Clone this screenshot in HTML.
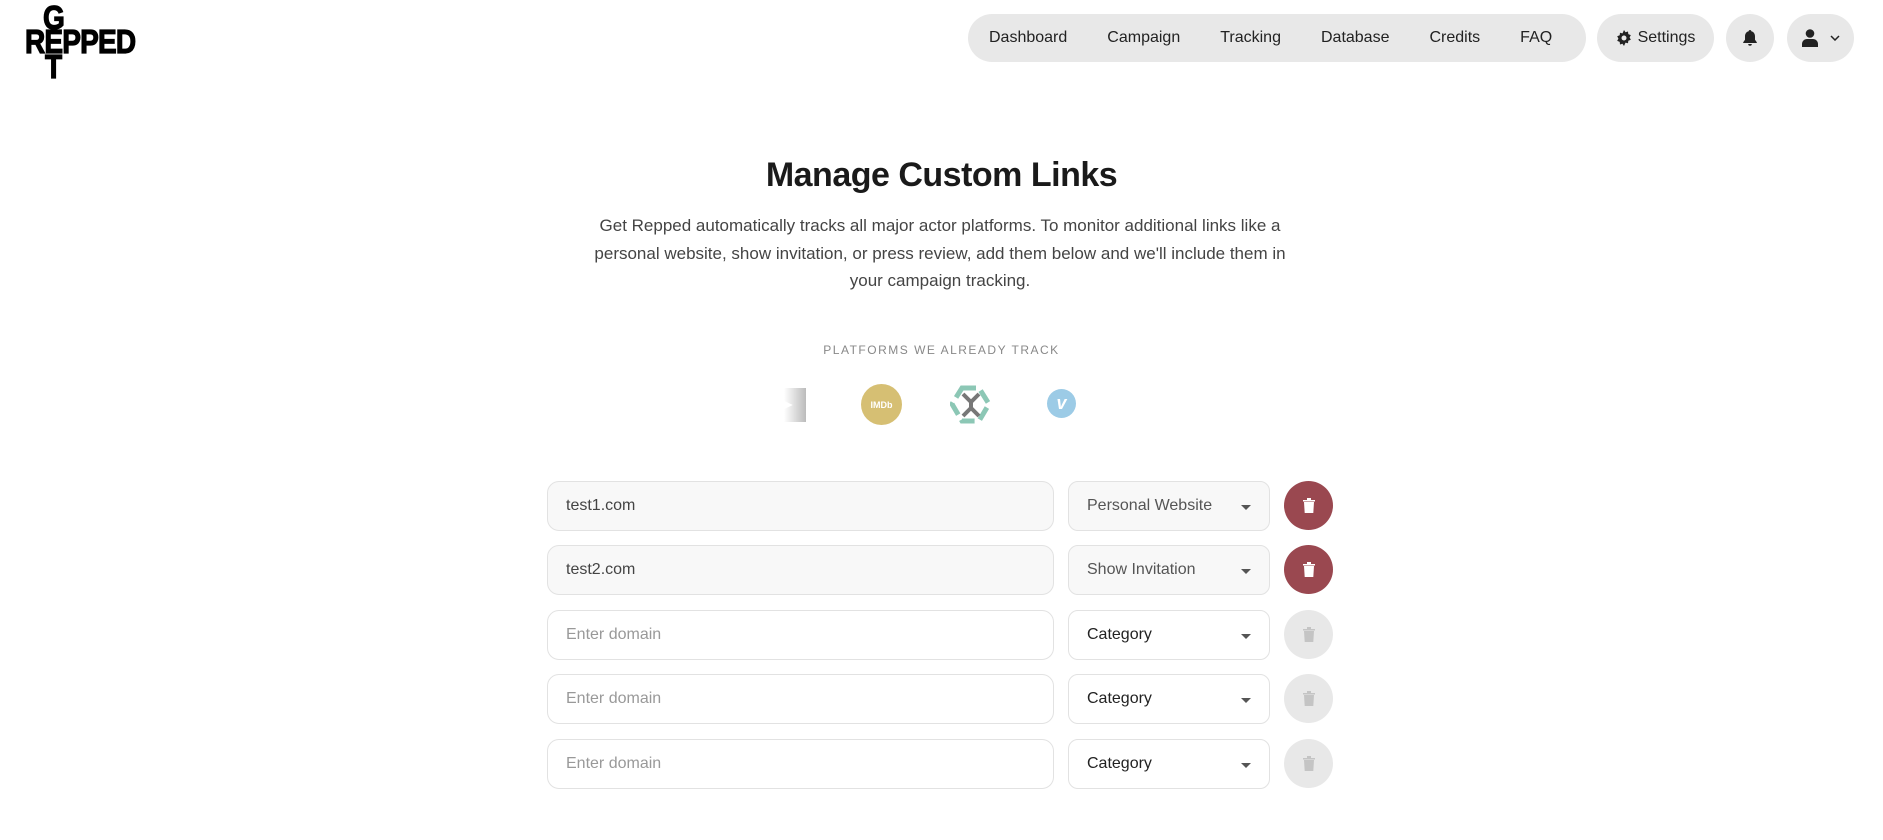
<!DOCTYPE html>
<html><head><meta charset="utf-8"><style>
*{box-sizing:border-box;margin:0;padding:0}
body{width:1883px;height:840px;background:#fff;font-family:"Liberation Sans",sans-serif;color:#222;position:relative;overflow:hidden}
.abs{position:absolute}
.pill{position:absolute;top:14px;height:48px;background:#e8e8e8;border-radius:24px;display:flex;align-items:center}
.nav a{font-size:16px;color:#222;margin:0 20px}
.logo{font-family:"Liberation Sans",sans-serif;font-weight:bold;font-size:33px;letter-spacing:-1px;transform:scaleX(0.85);transform-origin:left;position:absolute;line-height:1;-webkit-text-stroke:1.2px #000;color:#000}
h1{position:absolute;top:156px;width:100%;text-align:center;font-size:34px;font-weight:bold;letter-spacing:-0.5px;color:#1a1a1a}
.p{position:absolute;top:212px;left:590px;width:700px;text-align:center;font-size:17px;line-height:27.5px;color:#444}
.lab{position:absolute;top:343px;width:100%;text-align:center;font-size:12px;letter-spacing:1.5px;color:#888}
.in{position:absolute;left:547px;width:507px;height:50px;border:1px solid #e2e2e2;border-radius:12px;padding-left:18px;display:flex;align-items:center;font-size:16px}
.sel{position:absolute;left:1068px;width:202px;height:50px;border:1px solid #e2e2e2;border-radius:10px;padding-left:18px;display:flex;align-items:center;font-size:16px}
.sel:after{content:"";position:absolute;right:18px;top:23px;border:5px solid transparent;border-top:5px solid #555}
.del{position:absolute;left:1284px;width:49px;height:49px;border-radius:50%;display:flex;align-items:center;justify-content:center}
</style></head><body>
<div class="logo" style="left:43px;top:1px">G</div>
<div class="logo" style="left:25px;top:25px">REPPED</div>
<div class="logo" style="left:45px;top:50px">T</div>

<div class="pill nav" style="left:968px;width:618px;padding-left:0"><a style="margin-left:21px">Dashboard</a><a>Campaign</a><a>Tracking</a><a>Database</a><a>Credits</a><a>FAQ</a></div>
<div class="pill" style="left:1597px;width:117px;justify-content:center;font-size:16px"><svg width="16" height="16" viewBox="0 0 16 16" style="margin-right:6px"><path fill="#222" d="M8 0l1.5 2.2 2.5-.7.3 2.6 2.5 1-1.2 2.3 1.2 2.3-2.5 1-.3 2.6-2.5-.7L8 16l-1.5-2.2-2.5.7-.3-2.6-2.5-1L2.4 8.6 1.2 6.3l2.5-1 .3-2.6 2.5.7z"/><circle cx="8" cy="8" r="2.5" fill="#e8e8e8"/></svg>Settings</div>
<div class="pill" style="left:1726px;width:48px;justify-content:center"><svg width="14" height="17" viewBox="0 0 14 17"><path fill="#222" d="M7 0c.8 0 1.3.6 1.3 1.3 2.3.6 3.7 2.5 3.7 5v3.5l1.8 2.4V13H.2v-.8L2 9.8V6.3c0-2.5 1.4-4.4 3.7-5C5.7.6 6.2 0 7 0zM5.2 14h3.6a1.8 1.8 0 01-3.6 0z"/></svg></div>
<div class="pill" style="left:1787px;width:67px;justify-content:center"><svg width="16" height="18" viewBox="0 0 16 18"><circle cx="8" cy="4.5" r="4.3" fill="#222"/><path fill="#222" d="M0 18v-3c0-3 2.5-5 5-5h6c2.5 0 5 2 5 5v3z"/></svg><svg width="10" height="6" viewBox="0 0 10 6" style="margin-left:12px"><path d="M1 1l4 4 4-4" stroke="#222" stroke-width="1.5" fill="none"/></svg></div>

<h1>Manage Custom Links</h1>
<div class="p">Get Repped automatically tracks all major actor platforms. To monitor additional links like a personal website, show invitation, or press review, add them below and we'll include them in your campaign tracking.</div>
<div class="lab">PLATFORMS WE ALREADY TRACK</div>

<div class="abs" style="left:784px;top:388px;width:22px;height:34px;background:linear-gradient(90deg,#fff,#bbb);clip-path:polygon(0 0,100% 0,100% 100%,0 100%,0 62%,40% 50%,0 38%)"></div>
<div class="abs" style="left:861px;top:384px;width:41px;height:41px;border-radius:50%;background:#d6bf73;color:#fff;font-size:9px;font-weight:bold;display:flex;align-items:center;justify-content:center">IMDb</div>
<svg class="abs" style="left:950px;top:384px" width="41" height="41" viewBox="0 0 41 41"><path d="M12 4h17l10 16-10 17H12L2 20z" fill="none" stroke="#8cc7b5" stroke-width="5" stroke-dasharray="14 6"/><path d="M13 10l8 8 8-8M21 18v6M13 32l8-8 8 8" stroke="#777" stroke-width="4" fill="none"/></svg>
<div class="abs" style="left:1047px;top:389px;width:29px;height:29px;border-radius:50%;background:#9ccbe6;color:#fff;font-weight:bold;font-size:18px;display:flex;align-items:center;justify-content:center;font-style:italic">v</div>

<div class="in" style="top:481px;background:#f8f8f8;color:#444">test1.com</div>
<div class="sel" style="top:481px;background:#f8f8f8;color:#555">Personal Website</div>
<div class="del" style="top:481px;background:#9a4850"><svg width="12" height="15" viewBox="0 0 12 15"><path fill="#fff" d="M0 2h12v1.5H0zM4 0h4v2H4zM1 4h10l-.7 11H1.7z"/></svg></div>

<div class="in" style="top:545px;background:#f8f8f8;color:#444">test2.com</div>
<div class="sel" style="top:545px;background:#f8f8f8;color:#555">Show Invitation</div>
<div class="del" style="top:545px;background:#9a4850"><svg width="12" height="15" viewBox="0 0 12 15"><path fill="#fff" d="M0 2h12v1.5H0zM4 0h4v2H4zM1 4h10l-.7 11H1.7z"/></svg></div>

<div class="in" style="top:610px;color:#999">Enter domain</div>
<div class="sel" style="top:610px">Category</div>
<div class="del" style="top:610px;background:#e8e8e8"><svg width="12" height="15" viewBox="0 0 12 15"><path fill="#c4c4c4" d="M0 2h12v1.5H0zM4 0h4v2H4zM1 4h10l-.7 11H1.7z"/></svg></div>

<div class="in" style="top:674px;color:#999">Enter domain</div>
<div class="sel" style="top:674px">Category</div>
<div class="del" style="top:674px;background:#e8e8e8"><svg width="12" height="15" viewBox="0 0 12 15"><path fill="#c4c4c4" d="M0 2h12v1.5H0zM4 0h4v2H4zM1 4h10l-.7 11H1.7z"/></svg></div>

<div class="in" style="top:739px;color:#999">Enter domain</div>
<div class="sel" style="top:739px">Category</div>
<div class="del" style="top:739px;background:#e8e8e8"><svg width="12" height="15" viewBox="0 0 12 15"><path fill="#c4c4c4" d="M0 2h12v1.5H0zM4 0h4v2H4zM1 4h10l-.7 11H1.7z"/></svg></div>
</body></html>
